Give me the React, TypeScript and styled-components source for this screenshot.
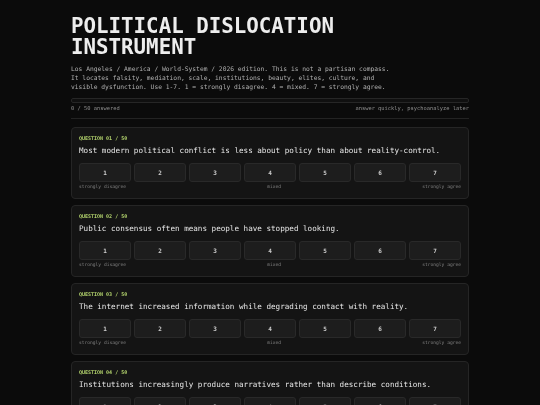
import React, { useState } from 'react'
import styled, { createGlobalStyle } from 'styled-components'

const mono = '"DejaVu Sans Mono", "Liberation Mono", monospace'

const GlobalStyle = createGlobalStyle`
  html, body {
    margin: 0;
    padding: 0;
    background: #0b0b0b;
    color: #d6d6d6;
    font-family: ${mono};
    -webkit-font-smoothing: antialiased;
  }
`

// own layer so small text is grey-antialiased instead of colour-fringed
const Page = styled.main`
  max-width: 398px;
  margin: 0 auto;
  padding: 16px 0 40px;
  will-change: transform;
`

const Title = styled.h1`
  margin: 0;
  font-family: ${mono};
  font-size: 20.8px;
  line-height: 21px;
  font-weight: 700;
  color: #ededed;
`

const Intro = styled.p`
  margin: 6px 0 0;
  font-size: 6.3px;
  line-height: 9px;
  color: #b0b0b0;
`

const Progress = styled.div`
  margin-top: 7px;
  height: 3px;
  border: 1px solid #262626;
  border-radius: 2px;
  background: #101010;
  overflow: hidden;
`

const ProgressFill = styled.div`
  height: 100%;
  background: #a9cf6e;
`

const StatusRow = styled.div`
  display: flex;
  justify-content: space-between;
  align-items: center;
  height: 10px;
  padding-bottom: 5px;
  border-bottom: 1px solid #232323;
  font-size: 5.4px;
  color: #8e8e8e;
`

const List = styled.div`
  display: flex;
  flex-direction: column;
  gap: 6px;
  margin-top: 8px;
`

const Card = styled.section`
  box-sizing: border-box;
  height: 72px;
  padding: 7px 7px 0;
  background: #141414;
  border: 1px solid #252525;
  border-radius: 4px;
`

const QLabel = styled.div`
  font-size: 5px;
  line-height: 7px;
  font-weight: 700;
  color: #b2d26c;
`

const QText = styled.div`
  margin-top: 4px;
  font-size: 7.6px;
  line-height: 9px;
  color: #e6e6e6;
`

const Scale = styled.div`
  display: grid;
  grid-template-columns: repeat(7, 1fr);
  gap: 3px;
  margin-top: 8px;
`

const ScaleButton = styled.button<{ $active: boolean }>`
  height: 19px;
  padding: 0;
  font-family: ${mono};
  font-size: 6px;
  font-weight: 700;
  color: ${p => (p.$active ? '#0b0b0b' : '#cfcfcf')};
  background: ${p => (p.$active ? '#a9cf6e' : '#1d1d1d')};
  border: 1px solid ${p => (p.$active ? '#a9cf6e' : '#292929')};
  border-radius: 3px;
  cursor: pointer;
`

const Anchors = styled.div`
  display: flex;
  justify-content: space-between;
  margin-top: 2px;
  font-size: 4.6px;
  line-height: 6px;
  color: #828282;
`

const questions = [
  'Most modern political conflict is less about policy than about reality-control.',
  'Public consensus often means people have stopped looking.',
  'The internet increased information while degrading contact with reality.',
  'Institutions increasingly produce narratives rather than describe conditions.',
  'Scale itself is a political force that no party is willing to name.',
]

const TOTAL = 50

export default function App() {
  const [answers, setAnswers] = useState<Record<number, number>>({})
  const answered = Object.keys(answers).length

  return (
    <Page>
      <GlobalStyle />
      <Title>
        POLITICAL DISLOCATION
        <br />
        INSTRUMENT
      </Title>
      <Intro>
        Los Angeles / America / World-System / 2026 edition. This is not a partisan compass.
        <br />
        It locates falsity, mediation, scale, institutions, beauty, elites, culture, and
        <br />
        visible dysfunction. Use 1-7. 1 = strongly disagree. 4 = mixed. 7 = strongly agree.
      </Intro>
      <Progress>
        <ProgressFill style={{ width: `${(answered / TOTAL) * 100}%` }} />
      </Progress>
      <StatusRow>
        <span>
          {answered} / {TOTAL} answered
        </span>
        <span>answer quickly, psychoanalyze later</span>
      </StatusRow>
      <List>
        {questions.map((q, i) => (
          <Card key={i}>
            <QLabel>
              QUESTION {String(i + 1).padStart(2, '0')} / {TOTAL}
            </QLabel>
            <QText>{q}</QText>
            <Scale>
              {[1, 2, 3, 4, 5, 6, 7].map(n => (
                <ScaleButton
                  key={n}
                  $active={answers[i] === n}
                  onClick={() => setAnswers({ ...answers, [i]: n })}
                >
                  {n}
                </ScaleButton>
              ))}
            </Scale>
            <Anchors>
              <span>strongly disagree</span>
              <span>mixed</span>
              <span>strongly agree</span>
            </Anchors>
          </Card>
        ))}
      </List>
    </Page>
  )
}
